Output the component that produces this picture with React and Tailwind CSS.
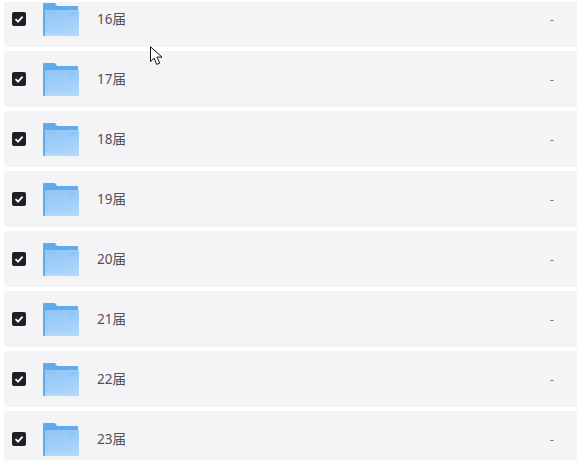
const rows = ["16届", "17届", "18届", "19届", "20届", "21届", "22届", "23届"];

function FolderIcon() {
  return (
    <svg width="36" height="36" viewBox="0 0 36 36" className="block shrink-0">
      <defs>
        <linearGradient id="front" x1="0" y1="0" x2="0.4" y2="1">
          <stop offset="0" stopColor="#8ec5f6" />
          <stop offset="1" stopColor="#abd4fa" />
        </linearGradient>
      </defs>
      <path d="M0 3a1 1 0 0 1 1-1h11l2 3h20.5a.5.5 0 0 1 .5.5V10H2.5v25H1a1 1 0 0 1-1-1z" fill="#5fabec" />
      <rect x="2" y="9" width="34" height="26" fill="url(#front)" />
      <rect x="2" y="32" width="34" height="3" fill="#b2d8fb" />
      <rect x="27" y="12" width="6" height="1" fill="#84bbec" />
      <rect x="25" y="14.5" width="8" height="1" fill="#8ac0ef" />
    </svg>
  );
}

function Row({ name }) {
  return (
    <div className="h-14 shrink-0 ml-1 flex items-center rounded-l bg-[#f4f4f6]">
      <span className="ml-2 w-[14px] h-[14px] rounded-[2px] bg-[#1f1f26] flex items-center justify-center shrink-0">
        <svg width="10" height="10" viewBox="0 0 10 10" fill="none">
          <path d="M1.5 5.2 4 7.6 8.6 2.6" stroke="#fff" strokeWidth="1.8" />
        </svg>
      </span>
      <span className="ml-[17px]">
        <FolderIcon />
      </span>
      <span className="ml-[18px] mt-px text-[13.5px] text-[#50505a]">{name}</span>
      <span className="ml-auto mr-[23px] mt-px text-[13px] text-[#77777f]">-</span>
    </div>
  );
}

export default function App() {
  return (
    <div className="relative h-[460px] w-[577px] bg-white pt-[2px] font-['Noto_Sans','Noto_Sans_CJK_SC',sans-serif]">
      <div className="h-[458px] overflow-hidden">
        <div className="-mt-[11px] flex flex-col gap-1">
          {rows.map((r) => (
            <Row key={r} name={r} />
          ))}
        </div>
      </div>
      <svg width="16" height="22" viewBox="0 0 16 22" className="absolute left-[150px] top-[46px]">
        <path d="M.5.8V15.6l3.6-3.4 2.6 6.2 3-1.3-2.7-6H12z" fill="#fff" stroke="#111" strokeWidth="1" />
      </svg>
    </div>
  );
}
